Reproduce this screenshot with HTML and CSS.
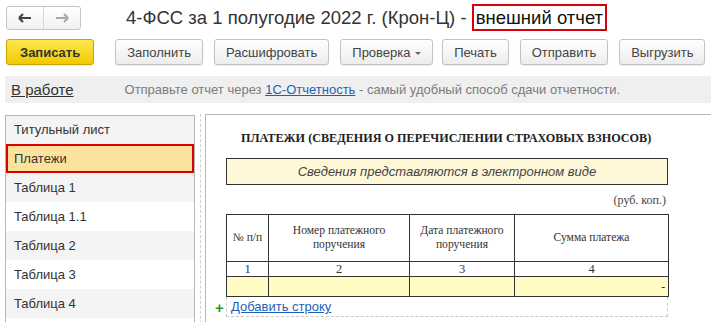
FILE: index.html
```html
<!DOCTYPE html>
<html lang="ru">
<head>
    <meta charset="UTF-8">
    <title>4-ФСС за 1 полугодие 2022 г.</title>
    <link rel="stylesheet" href="styles.css">
</head>
<body>
    <div class="header">
        <div class="nav">
            <span class="nav-btn">
                <svg width="14" height="10" viewBox="0 0 14 10"><path d="M1 5h12M1 5l4-4M1 5l4 4" stroke="#444" stroke-width="2.2" fill="none"/></svg>
            </span>
            <span class="nav-btn">
                <svg width="14" height="10" viewBox="0 0 14 10"><path d="M13 5H1M13 5l-4-4M13 5l-4 4" stroke="#aaa" stroke-width="2.2" fill="none"/></svg>
            </span>
        </div>
        <div class="title">4-ФСС за 1 полугодие 2022 г. (Крон-Ц) - <span class="mark">внешний отчет</span></div>
    </div>

    <div class="toolbar">
        <button class="button primary">Записать</button>
        <button class="button first">Заполнить</button>
        <button class="button">Расшифровать</button>
        <button class="button">Проверка <span class="caret"></span></button>
        <button class="button after-menu">Печать</button>
        <button class="button">Отправить</button>
        <button class="button">Выгрузить</button>
    </div>

    <div class="infobar">
        <a class="status">В работе</a>
        <span class="hint">Отправьте отчет через <a class="link">1С-Отчетность</a> - самый удобный способ сдачи отчетности.</span>
    </div>

    <div class="main">
        <div class="sections">
            <div class="item">Титульный лист</div>
            <div class="item selected">Платежи</div>
            <div class="item">Таблица 1</div>
            <div class="item">Таблица 1.1</div>
            <div class="item">Таблица 2</div>
            <div class="item">Таблица 3</div>
            <div class="item">Таблица 4</div>
        </div>
        <div class="splitter"></div>
        <div class="sheet">
            <div class="sheet-title">ПЛАТЕЖИ (СВЕДЕНИЯ О ПЕРЕЧИСЛЕНИИ СТРАХОВЫХ ВЗНОСОВ)</div>
            <div class="notice">Сведения представляются в электронном виде</div>
            <div class="units">(руб. коп.)</div>
            <table class="grid">
                <tr class="head">
                    <td class="c1">№ п/п</td>
                    <td class="c2">Номер платежного<br>поручения</td>
                    <td class="c3">Дата платежного<br>поручения</td>
                    <td class="c4">Сумма платежа</td>
                </tr>
                <tr class="nums">
                    <td>1</td>
                    <td>2</td>
                    <td>3</td>
                    <td>4</td>
                </tr>
                <tr class="input">
                    <td></td>
                    <td></td>
                    <td></td>
                    <td class="sum">-</td>
                </tr>
            </table>
            <div class="add-row">
                <span class="plus">+</span>
                <div class="add-box"><a class="link">Добавить строку</a></div>
            </div>
        </div>
    </div>
</body>
</html>
```

FILE: styles.css
```css
body {
    margin: 0;
    width: 711px;
    height: 322px;
    overflow: hidden;
    font-family: "Liberation Sans", Arial, sans-serif;
    background-color: #FFFFFF;
    color: #333;
}
.header {
    display: flex;
    align-items: center;
    height: 36px;
    padding-left: 6px;
}
.nav {
    display: flex;
    height: 22px;
    border: 1px solid #c4c4c4;
    border-radius: 3px;
    background: linear-gradient(#ffffff, #f1f1f1);
}
.nav-btn {
    width: 36px;
    display: flex;
    align-items: center;
    justify-content: center;
}
.nav-btn + .nav-btn {
    border-left: 1px solid #d6d6d6;
}
.title {
    margin-left: 45px;
    font-size: 18.5px;
    color: #333;
    white-space: nowrap;
}
.mark {
    border: 2px solid #d9000d;
    padding: 1px 2px;
    color: #111;
}
.toolbar {
    display: flex;
    padding-left: 6px;
    margin-top: 3px;
}
.button {
    height: 26px;
    padding: 0 11px;
    margin-left: 11px;
    white-space: nowrap;
    font-family: "Liberation Sans", Arial, sans-serif;
    font-size: 13px;
    color: #444;
    background: linear-gradient(#ffffff, #ececec);
    border: 1px solid #c2c2c2;
    border-radius: 3px;
    box-shadow: 0 1px 1px rgba(0, 0, 0, 0.08);
}
.button.primary {
    margin-left: 0;
    padding: 0 13px;
    font-weight: bold;
    color: #333;
    background: linear-gradient(#fde74f, #f2c900);
    border-color: #c9a400;
}
.button.first {
    margin-left: 21px;
}
.button.after-menu {
    margin-left: 9px;
}
.caret {
    display: inline-block;
    margin-left: 1px;
    vertical-align: middle;
    border-left: 3px solid transparent;
    border-right: 3px solid transparent;
    border-top: 3px solid #666;
}
.infobar {
    display: flex;
    align-items: center;
    height: 27px;
    margin: 11px 0 0 5px;
    padding-left: 6px;
    background-color: #efefef;
}
.status {
    font-size: 15px;
    color: #333;
    text-decoration: underline;
}
.hint {
    margin-left: 51px;
    font-size: 13px;
    color: #7b7b7b;
}
.link {
    color: #1d5fb8;
    text-decoration: underline;
}
.main {
    display: flex;
    margin-top: 11px;
    padding-left: 5px;
    height: 220px;
}
.sections {
    width: 188px;
    margin-top: 1px;
    border: 1px solid #b7b7b7;
    border-bottom: none;
}
.item {
    height: 29px;
    line-height: 29px;
    padding-left: 8px;
    font-size: 13px;
    color: #333;
}
.item:first-child {
    height: 28px;
    line-height: 28px;
}
.item:nth-child(odd) {
    background-color: #f4f4f4;
}
.item.selected {
    height: 25px;
    line-height: 25px;
    background-color: #fbe39d;
    border: 2px solid #dd0000;
    padding-left: 6px;
}
.splitter {
    width: 0;
    margin-left: 5px;
    border-left: 1px dashed #cfcfcf;
}
.sheet {
    flex: 1;
    margin-left: 4px;
    border-left: 1px solid #b7b7b7;
    border-top: 1px solid #b7b7b7;
    padding-left: 20px;
}
.sheet-title {
    height: 14px;
    margin: 16px 0 0 15px;
    line-height: 14px;
    font-family: "Liberation Serif", "Times New Roman", serif;
    font-weight: bold;
    font-size: 12.2px;
    color: #222;
}
.notice {
    width: 440px;
    height: 25px;
    margin-top: 13px;
    line-height: 25px;
    text-align: center;
    font-style: italic;
    font-size: 13px;
    color: #444;
    background-color: #fff8d8;
    border: 1px solid #333;
}
.units {
    width: 440px;
    height: 14px;
    margin-top: 8px;
    line-height: 14px;
    text-align: right;
    font-family: "Liberation Serif", "Times New Roman", serif;
    font-size: 12px;
    color: #444;
}
.grid {
    width: 443px;
    margin-top: 7px;
    border-collapse: collapse;
    font-family: "Liberation Serif", "Times New Roman", serif;
    font-size: 11.6px;
    line-height: 14px;
    color: #333;
}
.grid td {
    border: 1px solid #333;
    padding: 0;
    text-align: center;
}
.head td {
    height: 46px;
}
.c1 { width: 41px; }
.c2 { width: 140px; }
.c3 { width: 104px; }
.nums td {
    height: 14px;
    font-size: 12.5px;
}
.input td {
    height: 19px;
    background-color: #fffbc2;
}
.input .sum {
    text-align: right;
    padding-right: 3px;
}
.add-row {
    display: flex;
    align-items: center;
    margin-left: -11px;
}
.plus {
    width: 11px;
    font-size: 15px;
    font-weight: bold;
    color: #2b9a2b;
}
.add-box {
    width: 436px;
    height: 19px;
    line-height: 19px;
    padding-left: 4px;
    font-size: 13px;
    border: 1px dashed #c8c8c8;
    border-top: none;
}
```
